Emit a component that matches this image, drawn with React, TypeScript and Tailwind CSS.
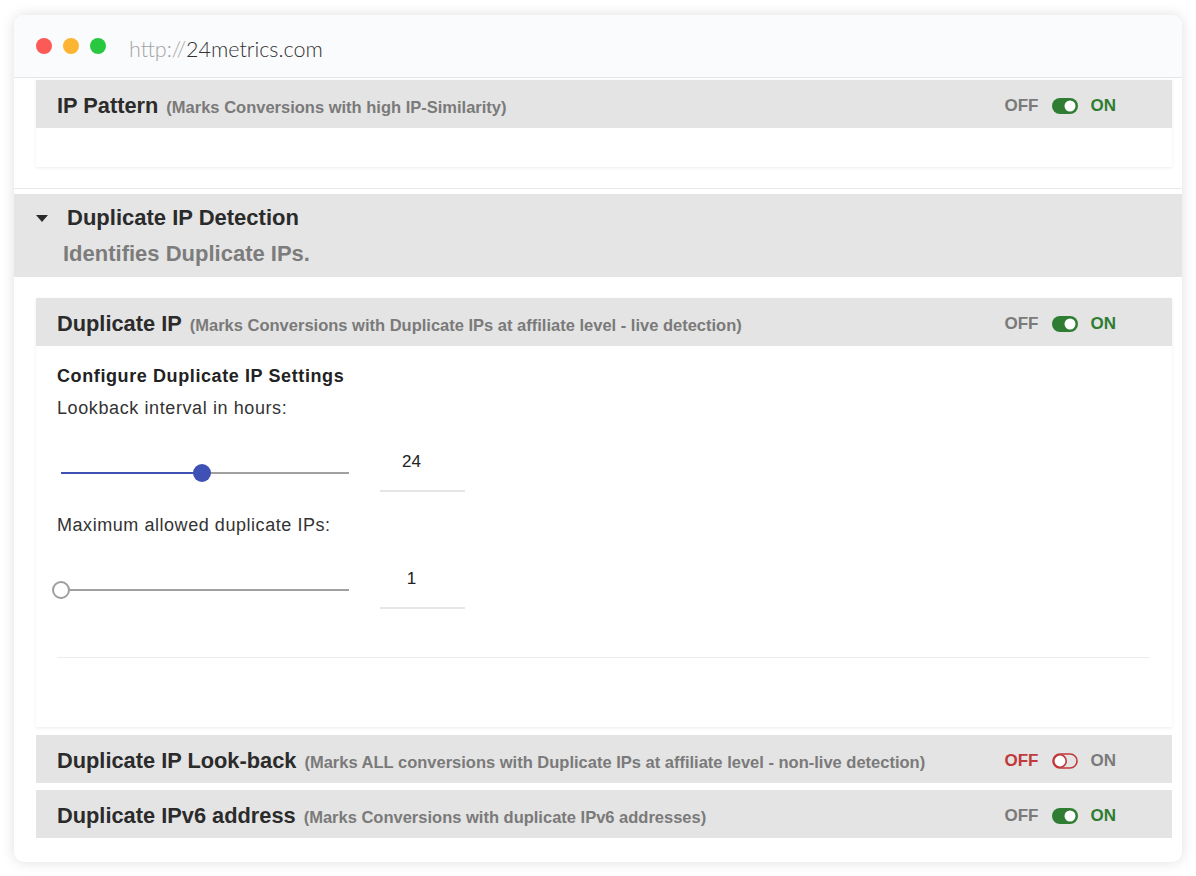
import React from "react";

const sans = { fontFamily: '"Liberation Sans", Arial, sans-serif' };

function Toggle({ on }: { on: boolean }) {
  // on/off switch as shown next to each rule
  return (
    <div className="flex items-center gap-[13px] text-[17px] font-bold">
      <span className={on ? "text-[#7a7a7a]" : "text-[#c0393b]"}>OFF</span>
      {on ? (
        <svg width="26" height="16" viewBox="0 0 26 16">
          <rect x="0" y="0" width="26" height="16" rx="8" fill="#2e7d32" />
          <circle cx="18" cy="8" r="5.5" fill="#fff" />
        </svg>
      ) : (
        <svg width="26" height="16" viewBox="0 0 26 16">
          <rect x="1" y="1" width="24" height="14" rx="7" fill="none" stroke="#c0393b" strokeWidth="1.6" />
          <circle cx="8" cy="8" r="6.2" fill="#fff" stroke="#c0393b" strokeWidth="1.6" />
        </svg>
      )}
      <span className={on ? "text-[#2e7d32]" : "text-[#7a7a7a]"}>ON</span>
    </div>
  );
}

function RuleHeader({ title, desc, on = true }: { title: string; desc: string; on?: boolean }) {
  return (
    <div className="flex h-[48px] items-center justify-between bg-[#e4e4e4] pl-[21px] pr-[56px] pt-[4px]">
      <div className="flex items-baseline gap-[8px]">
        <span className="text-[21.8px] font-bold text-[#2b2b2b]">{title}</span>
        <span className="text-[16.5px] font-bold text-[#7a7a7a]">{desc}</span>
      </div>
      <Toggle on={on} />
    </div>
  );
}

function SliderRow({ value, pct, filled }: { value: string; pct: number; filled: boolean }) {
  return (
    <div className="-ml-[5px] flex gap-[22px]">
      <div className="relative h-[46px] w-[306px]">
        <div className="absolute left-[9px] right-[9px] top-[26px] h-[2px] bg-[#a0a0a0]" />
        {filled && (
          <div
            className="absolute left-[9px] top-[26px] h-[2px] bg-[#3f51b5]"
            style={{ width: `${pct * 288}px` }}
          />
        )}
        <div
          className={
            "absolute top-[18px] h-[18px] w-[18px] rounded-full " +
            (filled ? "bg-[#3f51b5]" : "border-2 border-[#9e9e9e] bg-white")
          }
          style={{ left: `${pct * 288}px` }}
        />
      </div>
      <div className="h-[46px] w-[85px] border-b-2 border-[#e6e6e6] pr-[22px] pt-[5px] text-center text-[17px] leading-[22px] text-[#222]">
        {value}
      </div>
    </div>
  );
}

export default function App() {
  return (
    <div className="min-h-[876px] bg-white pl-[14px] pt-[15px]" style={sans}>
      <div className="h-[847px] w-[1168px] overflow-hidden rounded-[10px] bg-white shadow-[0_0_14px_rgba(0,0,0,0.13)]">
        {/* window title bar */}
        <div className="flex h-[63px] items-center border-b border-[#e4e6ea] bg-[#fafbfc] pl-[22px]">
          <div className="flex gap-[11px]">
            <span className="h-[16px] w-[16px] rounded-full bg-[#fc5a57]" />
            <span className="h-[16px] w-[16px] rounded-full bg-[#fdb432]" />
            <span className="h-[16px] w-[16px] rounded-full bg-[#2ac841]" />
          </div>
          <div
            className="ml-[23px] mt-[6px] text-[21.5px] font-light"
            style={{ fontFamily: "Lato, sans-serif" }}
          >
            <span className="text-[#a3a3a3]">http://</span>
            <span className="text-[#333]">24metrics.com</span>
          </div>
        </div>

        {/* IP Pattern (scrolled) */}
        <div className="border-b border-[#e8e8e8] pb-[21px] pl-[22px] pr-[10px] pt-[2px]">
          <div className="shadow-[0_1px_3px_rgba(0,0,0,0.08)]">
            <RuleHeader title="IP Pattern" desc="(Marks Conversions with high IP-Similarity)" />
            <div className="h-[39px] bg-white" />
          </div>
        </div>

        {/* Duplicate IP Detection section */}
        <div className="mt-[5px] bg-[#e5e5e5] pb-[10px] pl-[22px] pt-[11px]">
          <div className="flex items-center">
            <svg width="12" height="7" viewBox="0 0 12 7" className="mt-[1px]">
              <path d="M0 0 L12 0 L6 7 Z" fill="#2b2b2b" />
            </svg>
            <span className="ml-[19px] text-[22px] font-bold leading-[26px] text-[#2b2b2b]">
              Duplicate IP Detection
            </span>
          </div>
          <div className="ml-[27px] mt-[10px] text-[22px] font-bold leading-[26px] text-[#7c7c7c]">
            Identifies Duplicate IPs.
          </div>
        </div>

        <div className="pl-[22px] pr-[10px] pt-[21px]">
          <div className="shadow-[0_1px_3px_rgba(0,0,0,0.08)]">
            <RuleHeader
              title="Duplicate IP"
              desc="(Marks Conversions with Duplicate IPs at affiliate level - live detection)"
            />
            <div className="bg-white pb-[69px] pl-[21px] pr-[22px] pt-[19px]">
              <div className="text-[18px] font-bold leading-[22px] tracking-[0.6px] text-[#222]">
                Configure Duplicate IP Settings
              </div>
              <div className="mt-[10px] text-[18px] leading-[22px] tracking-[0.6px] text-[#333]">
                Lookback interval in hours:
              </div>
              <div className="mt-[27px]">
                <SliderRow value="24" pct={0.49} filled />
              </div>
              <div className="mt-[22px] text-[18px] leading-[22px] tracking-[0.55px] text-[#333]">
                Maximum allowed duplicate IPs:
              </div>
              <div className="mt-[27px]">
                <SliderRow value="1" pct={0} filled={false} />
              </div>
              <div className="mt-[48px] h-px bg-[#ececec]" />
            </div>
          </div>

          <div className="mt-[8px]">
            <RuleHeader
              title="Duplicate IP Look-back"
              desc="(Marks ALL conversions with Duplicate IPs at affiliate level - non-live detection)"
              on={false}
            />
          </div>
          <div className="mt-[7px]">
            <RuleHeader
              title="Duplicate IPv6 address"
              desc="(Marks Conversions with duplicate IPv6 addresses)"
            />
          </div>
        </div>
      </div>
    </div>
  );
}
